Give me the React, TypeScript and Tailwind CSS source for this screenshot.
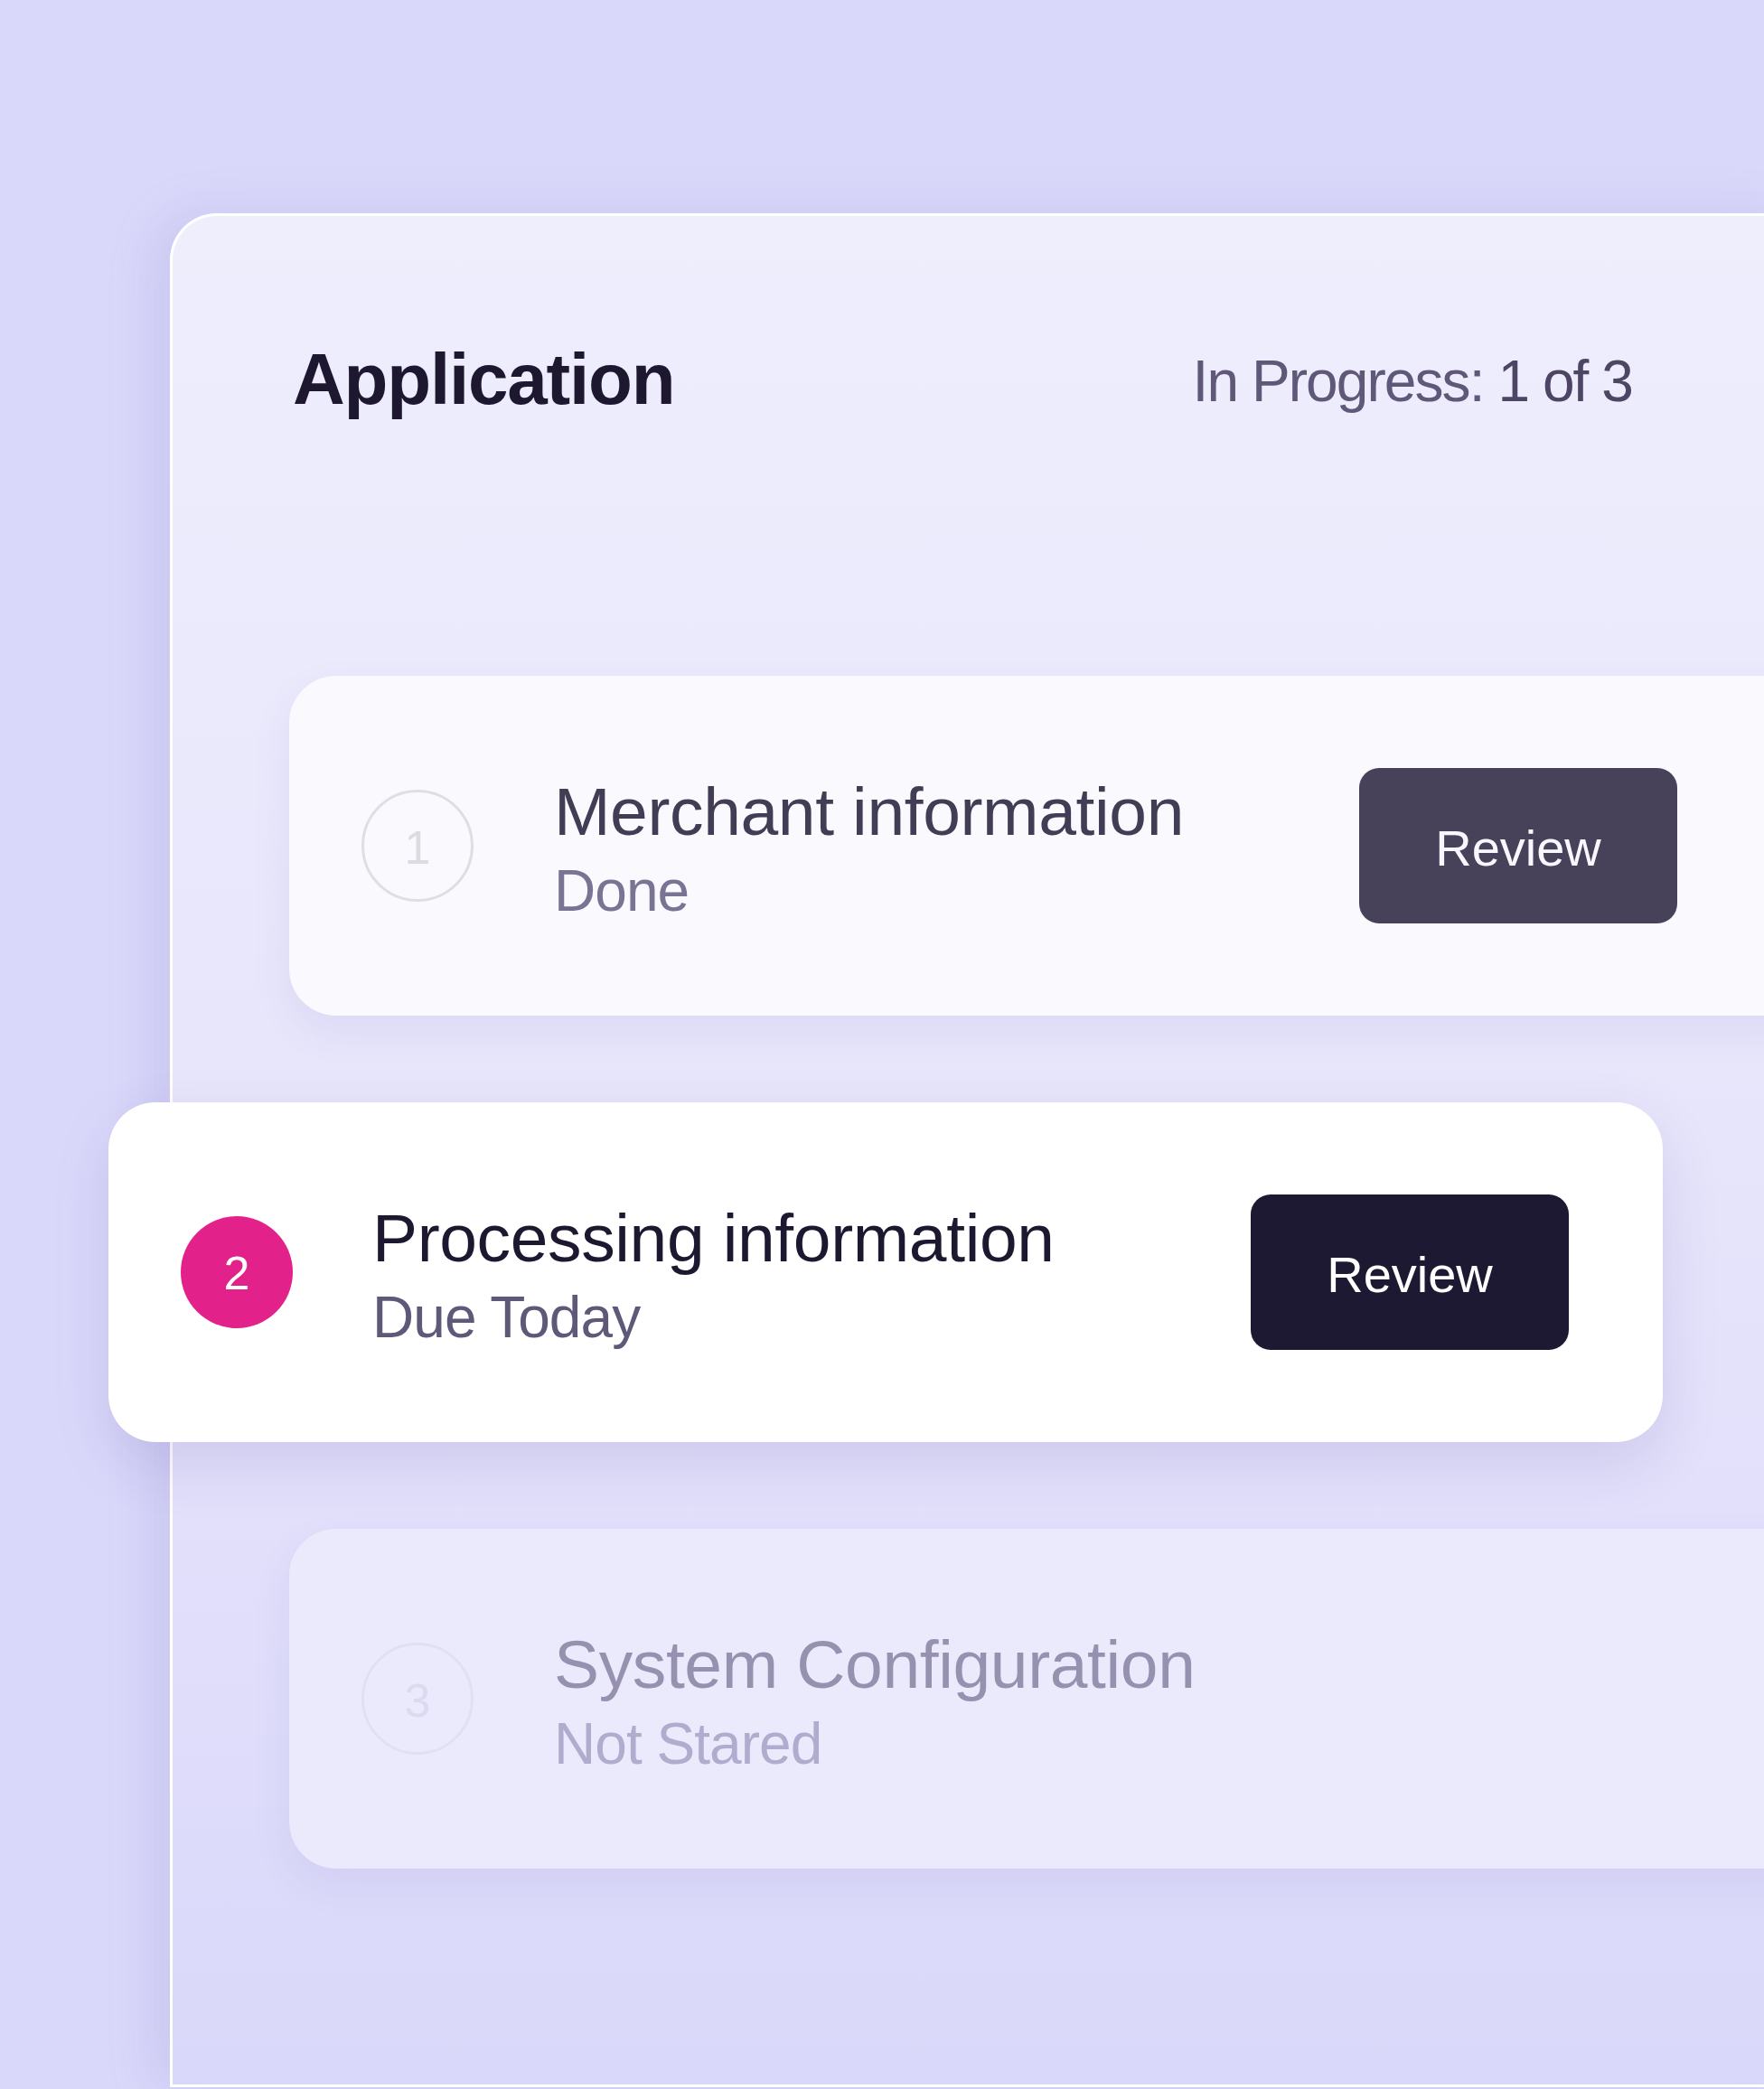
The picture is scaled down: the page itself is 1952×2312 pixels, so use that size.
import React from 'react';

type Step = {
  n: number;
  title: string;
  status: string;
};

const steps: Step[] = [
  { n: 1, title: 'Merchant information', status: 'Done' },
  { n: 2, title: 'Processing information', status: 'Due Today' },
  { n: 3, title: 'System Configuration', status: 'Not Stared' },
];

function StepText({ step, titleClass, statusClass, width }: { step: Step; titleClass: string; statusClass: string; width: string }) {
  return (
    <div className={`flex flex-col pt-[10px] ${width}`}>
      <div className={`text-[75px] leading-[80px] tracking-[-0.005em] ${titleClass}`}>{step.title}</div>
      <div className={`mt-[10px] text-[64px] leading-[76px] tracking-[-0.015em] ${statusClass}`}>{step.status}</div>
    </div>
  );
}

export default function App() {
  const [done, active, pending] = steps;

  return (
    <div className="h-[2312px] w-full overflow-hidden bg-[#dad8fa] pl-[188px] pt-[236px] font-['Liberation_Sans',Arial,sans-serif]">
      {/* application panel */}
      <div className="h-[2074px] w-[1800px] rounded-tl-[52px] border-b-[3px] border-l-[3px] border-t-[3px] border-white bg-linear-to-b from-[#efeefd] via-[#e7e5fb] to-[#dad8fa] shadow-[-18px_0_56px_rgba(80,70,170,0.12)]">
        <div className="ml-[133px] mt-[141px] flex w-[1482px] items-start justify-between">
          <h1 className="text-[80px] font-bold leading-[80px] tracking-[-0.015em] text-[#1d1830]">Application</h1>
          <div className="mt-[10px] text-[64px] leading-[64px] tracking-[-0.03em] text-[#5f5878]">
            In Progress: <span className="text-[#4c4563]">1 of 3</span>
          </div>
        </div>

        {/* step 1 */}
        <div className="ml-[129px] mt-[288px] flex h-[376px] w-[1700px] items-center rounded-[52px] bg-[#f9f9fe] pl-[80px] shadow-[0_18px_44px_rgba(80,70,170,0.08)]">
          <div className="flex h-[124px] w-[124px] shrink-0 items-center justify-center rounded-full border-[3px] border-[#dfdee6] pt-[4px] text-[52px] text-[#dcdbe3]">
            {done.n}
          </div>
          <div className="ml-[89px]">
            <StepText step={done} width="w-[891px]" titleClass="text-[#433c55]" statusClass="text-[#7a7394]" />
          </div>
          <button className="flex h-[172px] w-[352px] shrink-0 items-center justify-center rounded-[22px] bg-[#474159] pt-[6px] text-[56px] text-[#f8f7fe]">
            Review
          </button>
        </div>

        {/* step 2 (current) */}
        <div className="relative ml-[-71px] mt-[96px] flex h-[376px] w-[1720px] items-center rounded-[52px] bg-white pl-[80px] pr-[104px] shadow-[0_24px_64px_rgba(60,50,150,0.13)]">
          <div className="flex h-[124px] w-[124px] shrink-0 items-center justify-center rounded-full bg-[#e2228a] pt-[2px] text-[52px] text-white">
            {active.n}
          </div>
          <div className="ml-[88px]">
            <StepText step={active} width="w-[972px]" titleClass="text-[#1d1830]" statusClass="text-[#5f5878]" />
          </div>
          <button className="flex h-[172px] w-[352px] shrink-0 items-center justify-center rounded-[22px] bg-[#1e1932] pt-[6px] text-[56px] text-white">
            Review
          </button>
        </div>

        {/* step 3 */}
        <div className="ml-[129px] mt-[96px] flex h-[376px] w-[1700px] items-center rounded-[52px] bg-[#ebeafc] pl-[80px] shadow-[0_18px_44px_rgba(80,70,170,0.08)]">
          <div className="flex h-[124px] w-[124px] shrink-0 items-center justify-center rounded-full border-[3px] border-[#e1e0f3] pt-[4px] text-[52px] text-[#dcdaf0]">
            {pending.n}
          </div>
          <div className="ml-[89px]">
            <StepText step={pending} width="w-[891px]" titleClass="text-[#9591af]" statusClass="text-[#b0acce]" />
          </div>
        </div>
      </div>
    </div>
  );
}
